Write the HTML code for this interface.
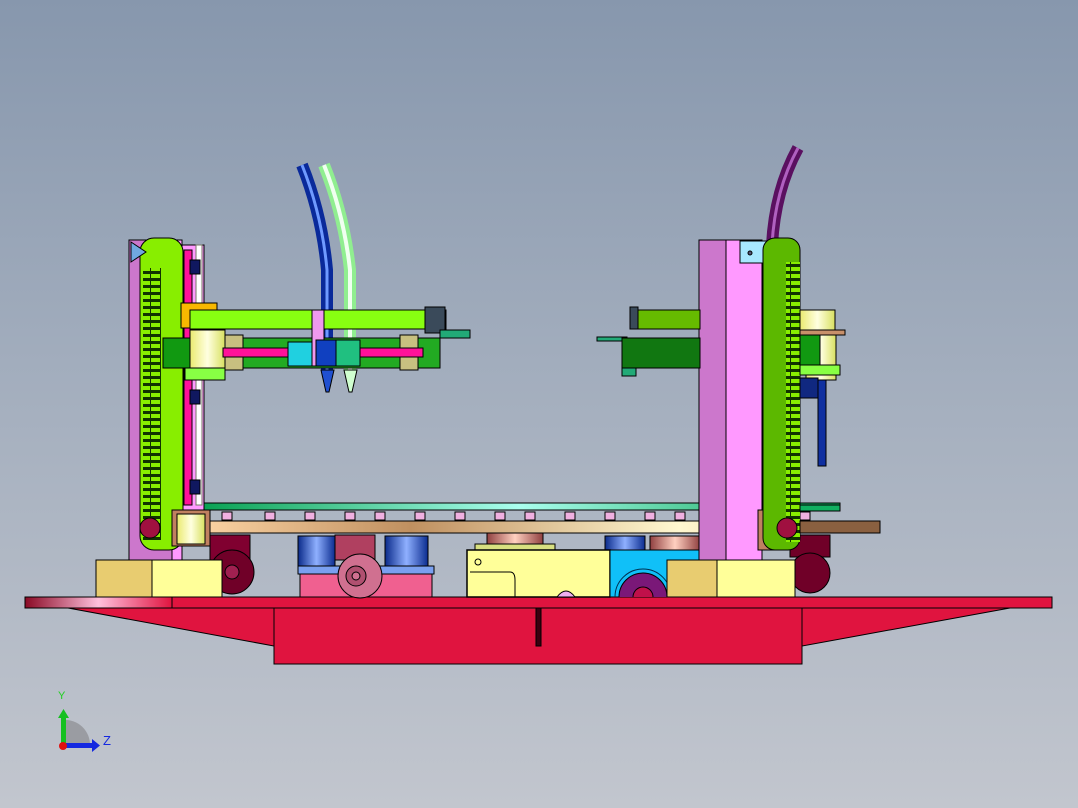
<!DOCTYPE html>
<html><head><meta charset="utf-8"><style>
html,body{margin:0;padding:0;}
body{width:1078px;height:808px;overflow:hidden;background:linear-gradient(#8797ad 0%,#a2adbd 45%,#c2c6ce 100%);}
svg{display:block}
</style></head><body>
<svg width="1078" height="808" viewBox="0 0 1078 808" xmlns="http://www.w3.org/2000/svg" font-family="Liberation Sans, sans-serif">
<defs>
<linearGradient id="bl" x1="0" x2="1"><stop offset="0" stop-color="#0a2a8a"/><stop offset=".5" stop-color="#8fb0ff"/><stop offset="1" stop-color="#0b2c90"/></linearGradient>
<linearGradient id="gr" x1="0" x2="1"><stop offset="0" stop-color="#06a050"/><stop offset=".5" stop-color="#aaffee"/><stop offset="1" stop-color="#06a050"/></linearGradient>
<linearGradient id="tan" x1="0" x2="1"><stop offset="0" stop-color="#f8d0a0"/><stop offset=".3" stop-color="#c09060"/><stop offset=".7" stop-color="#fff8d0"/><stop offset="1" stop-color="#e8b888"/></linearGradient>
<linearGradient id="rd" x1="0" x2="1"><stop offset="0" stop-color="#8a0a25"/><stop offset=".5" stop-color="#ffc0dd"/><stop offset="1" stop-color="#e0143f"/></linearGradient>
<linearGradient id="cy" x1="0" x2="1"><stop offset="0" stop-color="#eaea70"/><stop offset=".5" stop-color="#ffffe0"/><stop offset="1" stop-color="#d8e060"/></linearGradient>
<linearGradient id="cu" x1="0" x2="1"><stop offset="0" stop-color="#904040"/><stop offset=".5" stop-color="#ffd0c0"/><stop offset="1" stop-color="#904040"/></linearGradient>
<pattern id="teeth" width="10" height="7" patternUnits="userSpaceOnUse"><rect width="10" height="7" fill="#113300"/><rect x="1" y="1" width="9" height="4" fill="#88ee00"/></pattern>
<clipPath id="cbox"><rect x="610" y="550" width="90" height="47"/></clipPath>
</defs>
<g stroke="#000" stroke-width="1">
<!-- tubes -->
<path d="M302,165 Q322,215 327,270 L327,372" fill="none" stroke="#0a2a9a" stroke-width="12"/>
<path d="M302,165 Q322,215 327,270 L327,372" fill="none" stroke="#6f9aff" stroke-width="3"/>
<path d="M324,165 Q344,215 350,270 L350,372" fill="none" stroke="#90ee90" stroke-width="12"/>
<path d="M324,165 Q344,215 350,270 L350,372" fill="none" stroke="#f0fff0" stroke-width="4"/>
<path d="M321,370 L334,370 L329,392 L326,392Z" fill="#2050d0"/>
<path d="M344,370 L357,370 L352,392 L349,392Z" fill="#d0ffd0"/>
<path d="M798,148 Q775,190 772,245" fill="none" stroke="#5a1060" stroke-width="12"/>
<path d="M798,148 Q775,190 772,245" fill="none" stroke="#b060c0" stroke-width="3"/>

<!-- red base -->
<polygon points="68,608 274,646 274,664 802,664 802,646 1010,608" fill="#e0143f"/>
<rect x="274" y="608" width="528" height="56" fill="#e0143f"/>
<rect x="25" y="597" width="147" height="11" fill="url(#rd)"/>
<rect x="172" y="597" width="880" height="11" fill="#e0143f"/>
<rect x="536" y="608" width="5" height="38" fill="#3a0010"/>

<!-- platform -->
<rect x="197" y="503" width="643" height="7" fill="url(#gr)"/>
<rect x="210" y="521" width="670" height="12" fill="url(#tan)"/>
<g fill="#f0b0e0">
<rect x="222" y="512" width="10" height="8"/><rect x="265" y="512" width="10" height="8"/><rect x="305" y="512" width="10" height="8"/><rect x="345" y="512" width="10" height="8"/><rect x="375" y="512" width="10" height="8"/><rect x="415" y="512" width="10" height="8"/><rect x="455" y="512" width="10" height="8"/><rect x="495" y="512" width="10" height="8"/><rect x="525" y="512" width="10" height="8"/><rect x="565" y="512" width="10" height="8"/><rect x="605" y="512" width="10" height="8"/><rect x="645" y="512" width="10" height="8"/><rect x="675" y="512" width="10" height="8"/><rect x="800" y="512" width="10" height="8"/>
</g>
<!-- cylinders -->
<rect x="298" y="536" width="37" height="31" fill="url(#bl)"/>
<rect x="385" y="536" width="43" height="31" fill="url(#bl)"/>
<rect x="298" y="566" width="136" height="8" fill="#7aa0f0"/>
<rect x="300" y="574" width="132" height="23" fill="#f06090"/>
<rect x="605" y="536" width="40" height="16" fill="url(#bl)"/>
<rect x="650" y="536" width="50" height="18" fill="url(#cu)"/>
<!-- casters -->
<rect x="210" y="535" width="40" height="25" fill="#800030"/>
<circle cx="232" cy="572" r="22" fill="#700028"/>
<circle cx="232" cy="572" r="7" fill="#a02050"/>
<path d="M335,535 h40 v25 h-40z" fill="#b04060"/>
<circle cx="360" cy="576" r="22" fill="#d07090"/>
<circle cx="356" cy="576" r="10" fill="#b05070"/>
<circle cx="356" cy="576" r="4" fill="#d07090"/>
<rect x="790" y="535" width="40" height="22" fill="#700028"/>
<circle cx="810" cy="573" r="20" fill="#700028"/>
<!-- center boxes -->
<rect x="487" y="533" width="56" height="12" fill="url(#cu)"/>
<rect x="475" y="544" width="80" height="6" fill="#d8e080"/>
<rect x="467" y="550" width="143" height="47" fill="#ffff99" stroke-width="1.5"/>
<path d="M470,572 H510 Q515,572 515,580 V597" fill="none"/>
<circle cx="478" cy="562" r="3" fill="none"/>
<path d="M557,597 Q566,585 575,597Z" fill="#f0b0f0"/>
<rect x="610" y="550" width="90" height="47" fill="#10c0f8"/>
<g clip-path="url(#cbox)">
<circle cx="643" cy="597" r="28" fill="none" stroke="#003050"/>
<circle cx="643" cy="597" r="24" fill="#7a1878"/>
<circle cx="643" cy="597" r="10" fill="#c0104a"/>
</g>

<!-- left column -->
<rect x="129" y="240" width="43" height="320" fill="#cc77cc"/>
<rect x="172" y="240" width="10" height="320" fill="#ff99ff"/>
<rect x="182" y="245" width="22" height="265" fill="#ff99ff"/>
<rect x="184" y="250" width="8" height="255" fill="#ff1199"/>
<rect x="196" y="245" width="6" height="260" fill="#ffffff" stroke="#776"/>
<rect x="190" y="260" width="10" height="14" fill="#101860"/>
<rect x="190" y="390" width="10" height="14" fill="#101860"/>
<rect x="190" y="480" width="10" height="14" fill="#101860"/>
<rect x="140" y="238" width="43" height="312" rx="14" fill="#88ee00"/>
<rect x="143" y="268" width="18" height="272" fill="url(#teeth)" stroke="none"/>
<path d="M131,242 L146,252 L131,262Z" fill="#70a8e0"/>
<circle cx="150" cy="528" r="10" fill="#a01040"/>
<rect x="172" y="510" width="38" height="36" fill="#c08060"/>
<rect x="177" y="514" width="28" height="30" fill="url(#cy)"/>
<rect x="96" y="560" width="56" height="37" fill="#e8cc70"/>
<rect x="152" y="560" width="70" height="37" fill="#ffff99"/>
<!-- left arm -->
<rect x="181" y="303" width="36" height="25" fill="#f8b800"/>
<rect x="190" y="310" width="256" height="19" fill="#88ff11"/>
<rect x="425" y="307" width="20" height="26" fill="#3a4a5a"/>
<polygon points="440,330 470,330 470,338 440,338" fill="#22aa77"/>
<rect x="163" y="338" width="277" height="30" fill="#22aa22"/>
<rect x="163" y="338" width="28" height="30" fill="#119911"/>
<rect x="190" y="330" width="35" height="50" fill="url(#cy)"/>
<rect x="185" y="368" width="40" height="12" fill="#88ff44"/>
<rect x="225" y="335" width="18" height="35" fill="#c8c080"/>
<rect x="400" y="335" width="18" height="35" fill="#c8c080"/>
<rect x="223" y="348" width="200" height="9" fill="#ff1199"/>
<rect x="288" y="342" width="24" height="24" fill="#20d0e0"/>
<rect x="312" y="310" width="12" height="56" fill="#ee99ee"/>
<rect x="316" y="340" width="30" height="26" fill="#1040c0"/>
<rect x="336" y="340" width="24" height="26" fill="#20c080"/>

<!-- right column -->
<rect x="699" y="240" width="27" height="320" fill="#cc77cc"/>
<rect x="726" y="240" width="36" height="320" fill="#ff99ff"/>
<rect x="740" y="241" width="46" height="22" fill="#a8e8ff"/>
<circle cx="750" cy="253" r="2" fill="#557"/>
<rect x="758" y="510" width="30" height="40" fill="#c08060"/>
<rect x="763" y="238" width="37" height="312" rx="12" fill="#5cb800"/>
<rect x="786" y="262" width="14" height="280" fill="url(#teeth)" stroke="none"/>
<circle cx="787" cy="528" r="10" fill="#a01040"/>
<rect x="800" y="330" width="45" height="5" fill="#c8906a"/>
<rect x="800" y="310" width="35" height="20" fill="url(#cy)"/>
<rect x="806" y="335" width="30" height="45" fill="url(#cy)"/>
<rect x="800" y="335" width="20" height="30" fill="#119911"/>
<rect x="800" y="365" width="40" height="10" fill="#88ff44"/>
<rect x="800" y="378" width="18" height="20" fill="#102880"/>
<rect x="818" y="380" width="8" height="86" fill="#1030a0"/>
<rect x="800" y="505" width="40" height="6" fill="#10b060"/>
<rect x="800" y="521" width="80" height="12" fill="#8a6040"/>
<rect x="667" y="560" width="50" height="37" fill="#e8cc70"/>
<rect x="717" y="560" width="78" height="37" fill="#ffff99"/>
<!-- right arm -->
<rect x="632" y="310" width="68" height="19" fill="#66bb00"/>
<rect x="630" y="307" width="8" height="22" fill="#3a4a5a"/>
<rect x="597" y="337" width="30" height="4" fill="#22aa77"/>
<rect x="622" y="338" width="78" height="30" fill="#117711"/>
<rect x="622" y="368" width="14" height="8" fill="#22aa77"/>
</g>

<!-- triad -->
<path d="M63,720 A25,25 0 0 1 90,746 L63,746Z" fill="#9a9ca2"/>
<rect x="61" y="716" width="5" height="30" fill="#16c020"/>
<polygon points="58,718 63.5,709 69,718" fill="#16c020"/>
<rect x="63" y="743" width="30" height="5" fill="#1428e0"/>
<polygon points="92,739 100,745.5 92,752" fill="#1428e0"/>
<circle cx="63" cy="746" r="4" fill="#e01010"/>
<text x="58" y="699" font-size="11" fill="#20d020">Y</text>
<text x="103" y="745" font-size="13" fill="#1428e0">Z</text>
</svg>
</body></html>
